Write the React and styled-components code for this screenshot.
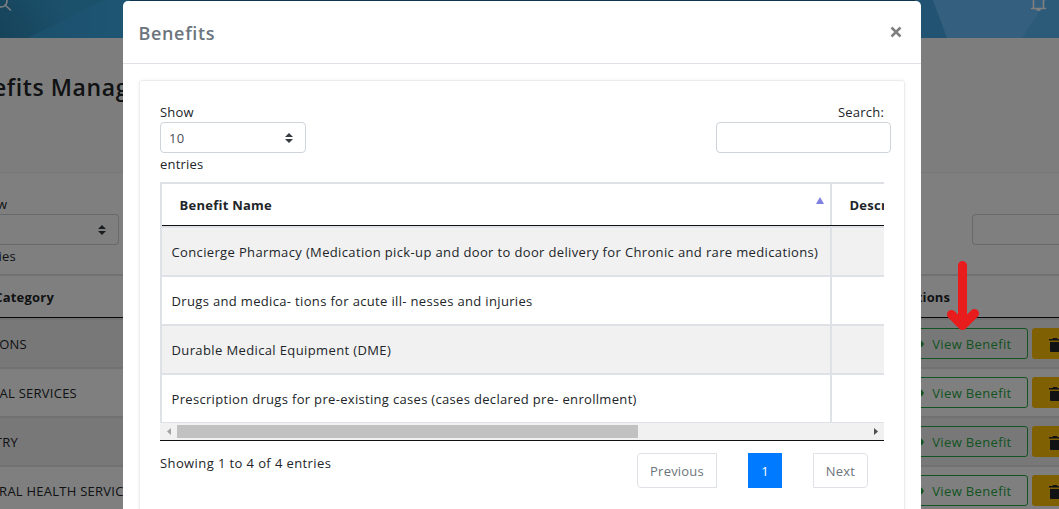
import React from "react";
import styled, { createGlobalStyle } from "styled-components";

const Global = createGlobalStyle`
  *, *::before, *::after { box-sizing: border-box; }
  body {
    margin: 0;
    overflow: hidden;
    font-family: "Open Sans", "Noto Sans", sans-serif;
    font-size: 13px;
    line-height: 20px;
    color: #212529;
  }
`;

const Screen = styled.div`
  position: relative;
  width: 1059px;
  height: 509px;
  overflow: hidden;
  background: #fff;
`;

const TopBar = styled.header`
  height: 38px;
  overflow: hidden;
  background: #3aa8e4;
`;

const PageHead = styled.div`
  height: 135px;
  padding-top: 33px;
  background: #fafafa;
  border-bottom: 1px solid #f0f0f0;
`;

const PageTitle = styled.h1`
  margin: 0;
  width: 129px;
  display: flex;
  justify-content: flex-end;
  white-space: nowrap;
  font-size: 23px;
  line-height: 32px;
  font-weight: 600;
  letter-spacing: 0.6px;
`;

const PageControls = styled.div`
  height: 101px;
  padding-top: 21px;
  display: flex;
  justify-content: space-between;
`;

const ClippedText = styled.div`
  width: ${(p) => p.$end}px;
  display: flex;
  justify-content: flex-end;
  white-space: nowrap;
  letter-spacing: ${(p) => p.$spacing || 0}px;
  font-weight: ${(p) => (p.$bold ? 700 : 400)};
`;

const PageSelect = styled.div`
  width: 119px;
  height: 31px;
  margin: 0 0 1px;
  padding-right: 12px;
  display: flex;
  align-items: center;
  justify-content: flex-end;
  border: 1px solid #ced4da;
  border-left: 0;
  border-radius: 0 4px 4px 0;
`;

const PageSearch = styled.div`
  width: 87px;
  height: 31px;
  margin-top: 20px;
  border: 1px solid #ced4da;
  border-right: 0;
  border-radius: 4px 0 0 4px;
`;

const PageTableHead = styled.div`
  height: 44px;
  display: flex;
  align-items: center;
  justify-content: space-between;
  border-top: 2px solid #dee2e6;
  border-bottom: 1px solid #111;
`;

const ActionsHead = styled.div`
  width: 158px;
  font-weight: 700;
  letter-spacing: 0.1px;
`;

const PageRow = styled.div`
  height: 49px;
  display: flex;
  align-items: center;
  justify-content: space-between;
  border-top: 2px solid #dee2e6;
  background: ${(p) => (p.$odd ? "#f1f1f1" : "#fff")};
`;

const Actions = styled.div`
  display: flex;
  gap: 4px;
`;

const ViewButton = styled.div`
  width: 125px;
  height: 31px;
  padding-right: 15.5px;
  display: flex;
  align-items: center;
  justify-content: flex-end;
  gap: 8px;
  white-space: nowrap;
  color: #28a745;
  border: 1px solid #28a745;
  border-radius: 3px;
  letter-spacing: 0.35px;
`;

const DeleteButton = styled.div`
  width: 27px;
  height: 31px;
  padding: 9px 0 0 17px;
  overflow: hidden;
  border-radius: 3px 0 0 3px;
  background: #ffc107;
`;

const Backdrop = styled.div`
  position: absolute;
  inset: 0;
  background: rgba(0, 0, 0, 0.5);
`;

const Modal = styled.section`
  position: absolute;
  top: 1px;
  left: 123px;
  width: 798px;
  height: 540px;
  background: #fff;
  border-radius: 5px;
`;

const ModalHeader = styled.div`
  height: 63px;
  padding: 0 19px 0 15.5px;
  display: flex;
  align-items: center;
  justify-content: space-between;
  border-bottom: 1px solid #dee2e6;
`;

const ModalTitle = styled.h2`
  margin: 2px 0 0;
  font-size: 18px;
  line-height: 26px;
  font-weight: 600;
  letter-spacing: 0.65px;
  color: #6c757d;
`;

const Card = styled.div`
  margin: 16px 16px 0;
  height: 460px;
  padding: 21px 20px 0;
  border: 1px solid #ececee;
  border-radius: 3px;
  box-shadow: 0 0 4px rgba(0, 0, 0, 0.05);
`;

const Controls = styled.div`
  height: 80px;
  display: flex;
  justify-content: space-between;
`;

const Field = styled.div`
  display: flex;
  flex-direction: column;
  align-items: ${(p) => (p.$right ? "flex-end" : "flex-start")};
  letter-spacing: 0.2px;
`;

const Select = styled.div`
  width: 146px;
  height: 31px;
  margin-bottom: 1px;
  padding: 0 12px 0 8px;
  display: flex;
  align-items: center;
  justify-content: space-between;
  color: #495057;
  border: 1px solid #ced4da;
  border-radius: 4px;
`;

const SearchBox = styled.div`
  width: 175px;
  height: 31px;
  margin-right: -7px;
  border: 1px solid #ced4da;
  border-radius: 4px;
`;

const TableView = styled.div`
  height: 259px;
  width: 724px;
  overflow: hidden;
  border-bottom: 1px solid #111;
`;

const Grid = styled.div`
  width: 980px;
  height: 241px;
  border-left: 2px solid #dee2e6;
  border-bottom: 1px solid #dee2e6;
  overflow: hidden;
`;

const HeadRow = styled.div`
  height: 44px;
  display: grid;
  grid-template-columns: 670px 310px;
  border-top: 2px solid #dee2e6;
  border-bottom: 1px solid #111;
`;

const HeadCell = styled.div`
  padding: 0 6px 0 17.5px;
  display: flex;
  align-items: center;
  justify-content: space-between;
  font-weight: 700;
  letter-spacing: 0.25px;
  border-right: 2px solid #dee2e6;
`;

const SortMark = styled.span`
  margin-top: -9px;
  border: 4px solid transparent;
  border-top: 0;
  border-bottom: 7px solid #8080e0;
`;

const Row = styled.div`
  height: 49px;
  display: grid;
  grid-template-columns: 670px 310px;
  border-top: 2px solid #dee2e6;
  background: ${(p) => (p.$odd ? "#f1f1f1" : "#fff")};
`;

const Cell = styled.div`
  padding: 0 0 0 9.5px;
  display: flex;
  align-items: center;
  white-space: nowrap;
  letter-spacing: ${(p) => p.$spacing || 0}px;
  border-right: 2px solid #dee2e6;
`;

const ScrollBar = styled.div`
  height: 17px;
  display: flex;
  align-items: center;
  background: #f1f1f1;
`;

const ScrollArrow = styled.div`
  width: 17px;
  display: flex;
  justify-content: center;
`;

const ScrollTrack = styled.div`
  flex: 1;
  height: 13px;
`;

const ScrollThumb = styled.div`
  width: 461px;
  height: 13px;
  background: #c1c1c1;
`;

const Footer = styled.div`
  display: flex;
  justify-content: space-between;
  padding: 12px 16px 0 0;
`;

const Info = styled.div`
  letter-spacing: 0.4px;
`;

const Pager = styled.div`
  display: flex;
  gap: 31px;
`;

const PageLink = styled.div`
  width: ${(p) => p.$width}px;
  height: 35px;
  display: flex;
  align-items: center;
  justify-content: center;
  letter-spacing: 0.2px;
  color: ${(p) => (p.$active ? "#fff" : "#6c757d")};
  background: ${(p) => (p.$active ? "#007bff" : "#fff")};
  border: 1px solid ${(p) => (p.$active ? "#007bff" : "#dee2e6")};
  border-radius: ${(p) => p.$radius || 0};
`;

const Pointer = styled.svg`
  position: absolute;
  left: 944px;
  top: 258px;
`;

const HeaderArt = () => (
  <svg width="1059" height="38" viewBox="0 0 1059 38">
    <defs>
      <linearGradient id="corner" gradientUnits="userSpaceOnUse" x1="0" y1="38" x2="60" y2="0">
        <stop offset="0" stopColor="#2c86b4" />
        <stop offset="1" stopColor="#38a2d8" />
      </linearGradient>
      <linearGradient id="glow" gradientUnits="userSpaceOnUse" x1="40" y1="0" x2="130" y2="0">
        <stop offset="0" stopColor="#38a2da" />
        <stop offset="1" stopColor="#3cace8" />
      </linearGradient>
    </defs>
    <rect width="1059" height="38" fill="#20689c" />
    <rect width="130" height="38" fill="url(#corner)" />
    <path d="M28 38L104 0H130V38Z" fill="url(#glow)" />
    <rect x="915" width="144" height="38" fill="#44a6e4" />
    <path d="M933 0H1059V38H947Z" fill="#68beff" />
    <path d="M1022 38L1047 0H1059V38Z" fill="#58b4f2" />
    <g fill="none" stroke="#fff" strokeWidth="1.6" strokeLinecap="round">
      <circle cx="1" cy="1" r="6" />
      <path d="M5.500 5.500L10.500 10" />
      <path d="M1031.500 8.500H1045.500M1033.500 8V-1M1043.500 8V-1M1037 10H1040" />
    </g>
  </svg>
);

const Carets = () => (
  <svg width="8" height="10" viewBox="0 0 8 10">
    <path d="M4 0L8 4H0ZM4 10L0 6H8Z" fill="#343a40" />
  </svg>
);

const Eye = () => (
  <svg width="16" height="12" viewBox="0 0 16 12">
    <path
      fillRule="evenodd"
      d="M0 6C3-1 13-1 16 6 13 13 3 13 0 6ZM8 2a4 4 0 1 0 0 8 4 4 0 0 0 0-8Z"
      fill="#28a745"
    />
  </svg>
);

const Trash = () => (
  <svg width="12" height="14" viewBox="0 0 12 14">
    <path d="M0 1H3.500L4 0H8L8.500 1H12V2.500H0ZM1 4H11V13Q11 14 10 14H2Q1 14 1 13Z" fill="#212529" />
  </svg>
);

const categories = [
  { text: "ONS", end: 27 },
  { text: "AL SERVICES", end: 77 },
  { text: "TRY", end: 18 },
  { text: "RAL HEALTH SERVICES", end: 138.5 },
];

const benefits = [
  { name: "Concierge Pharmacy (Medication pick-up and door to door delivery for Chronic and rare medications)", spacing: 0.36 },
  { name: "Drugs and medica- tions for acute ill- nesses and injuries", spacing: 0.34 },
  { name: "Durable Medical Equipment (DME)", spacing: 0.38 },
  { name: "Prescription drugs for pre-existing cases (cases declared pre- enrollment)", spacing: 0.32 },
];

export default function App() {
  return (
    <Screen>
      <Global />
      <TopBar>
        <HeaderArt />
      </TopBar>
      <PageHead>
        <PageTitle>efits Manag</PageTitle>
      </PageHead>
      <PageControls>
        <div>
          <ClippedText $end={7}>w</ClippedText>
          <PageSelect>
            <Carets />
          </PageSelect>
          <ClippedText $end={16} $spacing={0.2}>ies</ClippedText>
        </div>
        <PageSearch />
      </PageControls>
      <PageTableHead>
        <ClippedText $end={54} $spacing={0.2} $bold>Category</ClippedText>
        <ActionsHead>Actions</ActionsHead>
      </PageTableHead>
      {categories.map((c, i) => (
        <PageRow key={c.text} $odd={i % 2 === 0}>
          <ClippedText $end={c.end} $spacing={0.25}>{c.text}</ClippedText>
          <Actions>
            <ViewButton>
              <Eye />
              View Benefit
            </ViewButton>
            <DeleteButton>
              <Trash />
            </DeleteButton>
          </Actions>
        </PageRow>
      ))}

      <Backdrop />

      <Modal>
        <ModalHeader>
          <ModalTitle>Benefits</ModalTitle>
          <svg width="12" height="12" viewBox="0 0 12 12">
            <path d="M1.500 1.500L10.500 10.500M10.500 1.500L1.500 10.500" stroke="#7f7f7f" strokeWidth="2.500" />
          </svg>
        </ModalHeader>
        <Card>
          <Controls>
            <Field>
              Show
              <Select>
                10
                <Carets />
              </Select>
              entries
            </Field>
            <Field $right>
              Search:
              <SearchBox />
            </Field>
          </Controls>
          <TableView>
            <Grid>
              <HeadRow>
                <HeadCell>
                  Benefit Name
                  <SortMark />
                </HeadCell>
                <HeadCell>Description</HeadCell>
              </HeadRow>
              {benefits.map((b, i) => (
                <Row key={b.name} $odd={i % 2 === 0}>
                  <Cell $spacing={b.spacing}>{b.name}</Cell>
                  <Cell />
                </Row>
              ))}
            </Grid>
            <ScrollBar>
              <ScrollArrow>
                <svg width="4" height="7" viewBox="0 0 4 7">
                  <path d="M4 0V7L0 3.500Z" fill="#a3a3a3" />
                </svg>
              </ScrollArrow>
              <ScrollTrack>
                <ScrollThumb />
              </ScrollTrack>
              <ScrollArrow>
                <svg width="4" height="7" viewBox="0 0 4 7">
                  <path d="M0 0V7L4 3.500Z" fill="#505050" />
                </svg>
              </ScrollArrow>
            </ScrollBar>
          </TableView>
          <Footer>
            <Info>Showing 1 to 4 of 4 entries</Info>
            <Pager>
              <PageLink $width={80} $radius="4px 0 0 4px">Previous</PageLink>
              <PageLink $width={34} $active>1</PageLink>
              <PageLink $width={55} $radius="0 4px 4px 0">Next</PageLink>
            </Pager>
          </Footer>
        </Card>
      </Modal>

      <Pointer width="38" height="76" viewBox="0 0 38 76">
        <path
          d="M18.500 7.500V67M7.500 56.500L18.500 67.500L30.500 55.500"
          fill="none"
          stroke="#e81c1c"
          strokeWidth="9"
          strokeLinecap="round"
          strokeLinejoin="round"
        />
      </Pointer>
    </Screen>
  );
}
